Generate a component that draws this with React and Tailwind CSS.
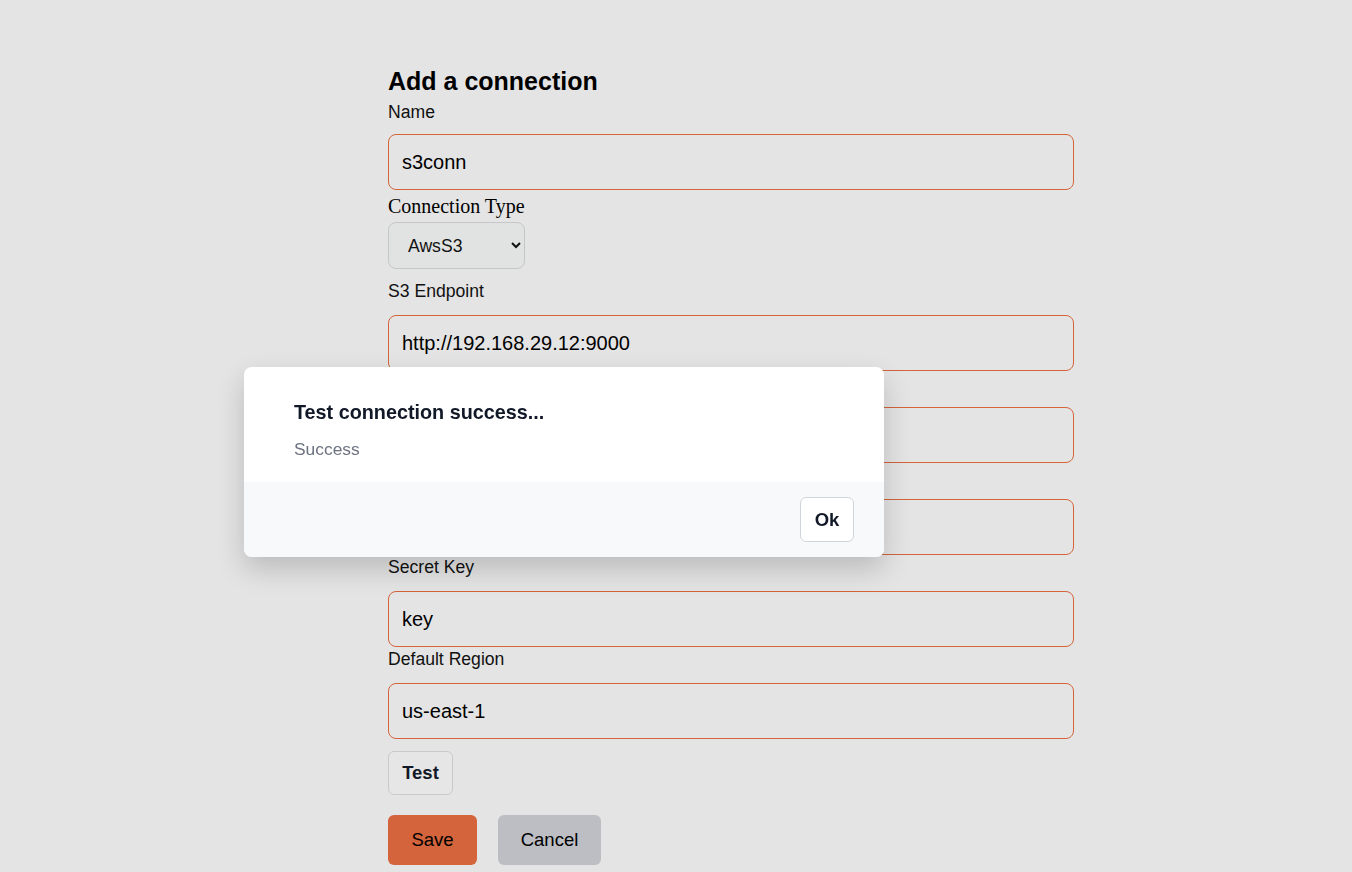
const fields = [
  { label: "S3 Endpoint", value: "http://192.168.29.12:9000" },
  { label: "Access Key Id", value: "minioadmin" },
  { label: "Bucket", value: "bucket" },
  { label: "Secret Key", value: "key" },
  { label: "Default Region", value: "us-east-1" },
];

function TextField({ label, value }) {
  return (
    <div className="flex flex-col">
      <label className="text-[17.6px] leading-6 text-[#111]">{label}</label>
      <input
        readOnly
        value={value}
        className="mt-3 h-[56px] w-full rounded-lg border border-[#d3643b] bg-transparent px-[13px] text-[20px] text-black outline-none"
      />
    </div>
  );
}

function SuccessDialog() {
  return (
    <div className="fixed inset-0 flex items-start justify-start">
      <div className="ml-[244px] mt-[367px] w-[640px] overflow-hidden rounded-lg bg-white shadow-[0_12px_28px_rgba(0,0,0,0.18)]">
        <div className="h-[115px] px-[50px] pt-[31px]">
          <h3 className="text-[19.8px] font-bold leading-7 text-[#111827]">
            Test connection success...
          </h3>
          <p className="mt-[11px] text-[17.4px] leading-6 text-[#6b7280]">Success</p>
        </div>
        <div className="flex h-[75px] items-start justify-end bg-[#f8f9fa] px-[30px] pt-[15px]">
          <button className="h-[45px] w-[54px] rounded-md border border-gray-300 bg-white text-[18.5px] font-bold text-[#111827]">
            Ok
          </button>
        </div>
      </div>
    </div>
  );
}

export default function App() {
  return (
    <div
      className="relative min-h-[872px] bg-[#e4e4e4]"
      style={{ fontFamily: '"Liberation Sans", Arial, sans-serif' }}
    >
      <div className="mx-auto w-[686px] translate-x-[55px] pt-[65px]">
        <h2 className="text-[25px] font-bold leading-8 text-black">
          Add a connection
        </h2>
        <div className="flex flex-col">
          <label className="mt-[3px] text-[17.6px] leading-6 text-[#111]">Name</label>
          <input
            readOnly
            value="s3conn"
            className="mt-[10px] h-[56px] w-full rounded-lg border border-[#d3643b] bg-transparent px-[13px] text-[20px] text-black outline-none"
          />
        </div>
        <label
          className="block text-[20px] leading-8 text-black"
          style={{ fontFamily: '"Liberation Serif", "Times New Roman", serif' }}
        >
          Connection Type
        </label>
        <select
          defaultValue="AwsS3"
          className="h-[47px] w-[137px] rounded-lg border border-[#c4c6c9] bg-[#e1e3e3] pl-[15px] pr-2 text-[17.6px] text-[#111]"
        >
          <option>AwsS3</option>
          <option>Azure</option>
          <option>Gcs</option>
        </select>
        <div className="mt-[10px] flex flex-col">
          {fields.map((f) => (
            <TextField key={f.label} label={f.label} value={f.value} />
          ))}
        </div>
        <button className="mt-3 h-[44px] w-[65px] rounded-md border border-[#c9cacc] bg-[#e6e6e6] text-[18.5px] font-bold text-[#111827]">
          Test
        </button>
        <div className="mt-[20px] flex gap-[21px]">
          <button className="h-[50px] w-[89px] rounded-md bg-[#d3643b] text-[18.5px] text-black">
            Save
          </button>
          <button className="h-[50px] w-[103px] rounded-md bg-[#bcbec4] text-[18.5px] text-black">
            Cancel
          </button>
        </div>
      </div>
      <SuccessDialog />
    </div>
  );
}
